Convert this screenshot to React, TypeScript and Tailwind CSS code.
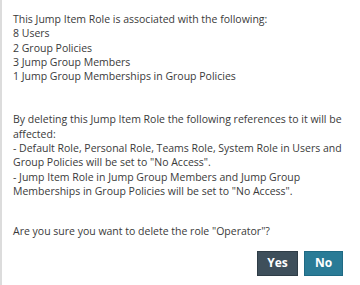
export default function App() {
  return (
    <div className="w-[360px] h-[285px] bg-white border-l-2 border-[#dcdcdc] text-[10.5px] leading-[14.3px] text-[#3a3a3a] font-['Open_Sans',sans-serif]">
      <div className="pl-[11px] pr-[17px] pt-[12px]">
        <p>
          This Jump Item Role is associated with the following:
          <br />8 Users
          <br />2 Group Policies
          <br />3 Jump Group Members
          <br />1 Jump Group Memberships in Group Policies
        </p>
        <p className="mt-[29px]">
          By deleting this Jump Item Role the following references to it will be affected:
          <br />- Default Role, Personal Role, Teams Role, System Role in Users and Group Policies will be set to "No Access".
          <br />- Jump Item Role in Jump Group Members and Jump Group Memberships in Group Policies will be set to "No Access".
        </p>
        <p className="mt-[26px]">Are you sure you want to delete the role "Operator"?</p>
        <div className="flex justify-end gap-[6px] mt-[12px]">
          <button className="h-[25px] w-[41px] bg-[#3e4f5b] border border-[#2f3d47] text-white font-bold text-[12px]">Yes</button>
          <button className="h-[25px] w-[39px] bg-[#2a7b96] border border-[#1f6a84] text-white font-bold text-[12px]">No</button>
        </div>
      </div>
    </div>
  );
}
